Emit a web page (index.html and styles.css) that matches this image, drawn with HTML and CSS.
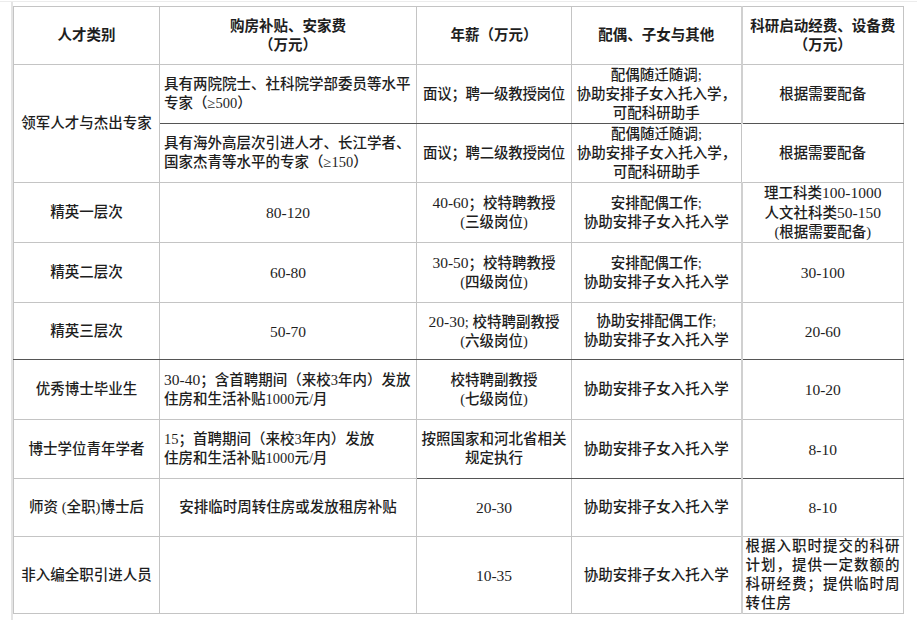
FILE: index.html
```html
<!DOCTYPE html>
<html lang="zh-CN">
<head>
<meta charset="utf-8">
<title>人才引进待遇</title>
<link rel="stylesheet" href="styles.css">
</head>
<body>
<div class="sheet">
<table class="grid">
  <colgroup>
    <col class="c1"><col class="c2"><col class="c3"><col class="c4"><col class="c5">
  </colgroup>
  <tr class="h58 head">
    <th>人才类别</th>
    <th>购房补贴、安家费<br>（万元）</th>
    <th>年薪（万元）</th>
    <th>配偶、子女与其他</th>
    <th>科研启动经费、设备费<br>（万元）</th>
  </tr>
  <tr class="h59">
    <td rowspan="2" class="cat">领军人才与杰出专家</td>
    <td class="left dark-b">具有两院院士、社科院学部委员等水平<br>专家（≥500）</td>
    <td class="tight dark-b">面议；聘一级教授岗位</td>
    <td class="dark-b">配偶随迁随调;<br>协助安排子女入托入学，<br>可配科研助手</td>
    <td class="dark-b">根据需要配备</td>
  </tr>
  <tr class="h59">
    <td class="left">具有海外高层次引进人才、长江学者、<br>国家杰青等水平的专家（≥150）</td>
    <td class="tight">面议；聘二级教授岗位</td>
    <td>配偶随迁随调;<br>协助安排子女入托入学，<br>可配科研助手</td>
    <td>根据需要配备</td>
  </tr>
  <tr class="h57">
    <td>精英一层次</td>
    <td class="num">80-120</td>
    <td><span class="num">40-60</span>；校特聘教授<br>(三级岗位)</td>
    <td>安排配偶工作;<br>协助安排子女入托入学</td>
    <td>理工科类<span class="num">100-1000</span><br>人文社科类<span class="num">50-150</span><br>(根据需要配备)</td>
  </tr>
  <tr class="h60">
    <td>精英二层次</td>
    <td class="num">60-80</td>
    <td><span class="num">30-50</span>；校特聘教授<br>(四级岗位)</td>
    <td>安排配偶工作;<br>协助安排子女入托入学</td>
    <td class="num">30-100</td>
  </tr>
  <tr class="h57 dark-row">
    <td>精英三层次</td>
    <td class="num">50-70</td>
    <td><span class="num">20-30</span>; 校特聘副教授<br>(六级岗位)</td>
    <td>协助安排配偶工作;<br>协助安排子女入托入学</td>
    <td class="num">20-60</td>
  </tr>
  <tr class="h60">
    <td>优秀博士毕业生</td>
    <td class="left"><span class="num">30-40</span>；含首聘期间（来校3年内）发放<br>住房和生活补贴1000元/月</td>
    <td>校特聘副教授<br>(七级岗位)</td>
    <td>协助安排子女入托入学</td>
    <td class="num">10-20</td>
  </tr>
  <tr class="h59">
    <td>博士学位青年学者</td>
    <td class="left">15；首聘期间（来校3年内）发放<br>住房和生活补贴1000元/月</td>
    <td class="dark-b">按照国家和河北省相关<br>规定执行</td>
    <td class="dark-b">协助安排子女入托入学</td>
    <td class="dark-b num">8-10</td>
  </tr>
  <tr class="h58">
    <td>师资 (全职)博士后</td>
    <td>安排临时周转住房或发放租房补贴</td>
    <td class="num">20-30</td>
    <td>协助安排子女入托入学</td>
    <td class="num">8-10</td>
  </tr>
  <tr class="h77">
    <td>非入编全职引进人员</td>
    <td></td>
    <td class="num">10-35</td>
    <td>协助安排子女入托入学</td>
    <td class="left wide">根据入职时提交的科研<br>计划，提供一定数额的<br>科研经费；提供临时周<br>转住房</td>
  </tr>
</table>
</div>
</body>
</html>
```
FILE: styles.css
```css
html, body {
  margin: 0;
  padding: 0;
  background: #ffffff;
}

.sheet {
  width: 917px;
  height: 625px;
  box-sizing: border-box;
  padding: 4px 0 0 13px;
  border-top: 1px solid #ececec;
  margin-top: 1px;
  position: relative;
}

.sheet::before {
  content: "";
  position: absolute;
  left: 11px;
  top: 0;
  width: 2px;
  height: 618px;
  background: #e4e4e4;
}

.grid {
  border-collapse: collapse;
  table-layout: fixed;
  width: 891px;
  font-family: "Liberation Serif", "Noto Sans CJK SC", serif;
  font-size: 14.5px;
  line-height: 19px;
  color: #1e1e1e;
  border-top: 1px solid #777;
  border-left: 1px solid #bdbdbd;
  border-right: 1px solid #9a9a9a;
}

.c1 { width: 146px; }
.c2 { width: 257px; }
.c3 { width: 155px; }
.c4 { width: 170px; }
.c5 { width: 162px; }

.grid th,
.grid td {
  border: 1px solid #c4c4c4;
  padding: 0 3px;
  text-align: center;
  vertical-align: middle;
  white-space: nowrap;
  overflow: hidden;
}

.grid th {
  font-weight: 700;
}

.grid td {
  font-weight: 500;
}

.grid .num {
  font-size: 15.5px;
}

.grid td:nth-child(5),
.grid th:nth-child(5) {
  border-left: 2px solid #d0d0d0;
}

.h57 { height: 57px; }
.h58 { height: 58px; }
.h59 { height: 59px; }
.h60 { height: 60px; }
.h77 { height: 77px; }

.grid .left {
  text-align: left;
  padding-left: 4px;
}

.grid .tight {
  padding: 0 1px;
  letter-spacing: -0.3px;
}

.grid .wide {
  letter-spacing: 1px;
  padding-left: 3px;
}

.grid .dark-b {
  border-bottom: 1px solid #555;
}

.dark-row td {
  border-bottom: 1px solid #555;
}
```
